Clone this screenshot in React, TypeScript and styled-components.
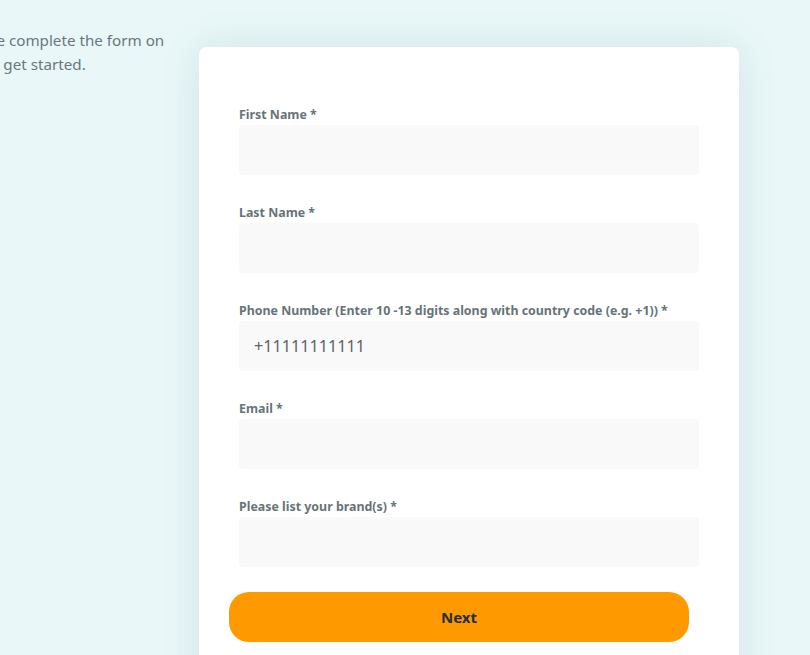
import * as React from 'react';
import styled, { createGlobalStyle } from 'styled-components';

const GlobalStyle = createGlobalStyle`
  html, body {
    margin: 0;
    padding: 0;
    height: 100%;
    overflow: hidden;
    background: #e9f7f8;
    font-family: "Noto Sans", "Open Sans", sans-serif;
  }
  #root {
    height: 100%;
  }
`;

const fields = [
  { label: 'First Name *', value: '' },
  { label: 'Last Name *', value: '' },
  { label: 'Phone Number (Enter 10 -13 digits along with country code (e.g. +1)) *', value: '+11111111111' },
  { label: 'Email *', value: '' },
  { label: 'Please list your brand(s) *', value: '' },
];

export default function App() {
  return (
    <>
      <GlobalStyle />
      <Page>
        <Intro>Now, please complete the form on the right to get started.</Intro>
        <Card>
          {fields.map((field, index) => (
            <Field key={index}>
              <Label>{field.label}</Label>
              <Input defaultValue={field.value} />
            </Field>
          ))}
          <NextButton type="button">Next</NextButton>
        </Card>
      </Page>
    </>
  );
}

const Page = styled.div`
  display: flex;
  justify-content: flex-end;
  align-items: flex-start;
  gap: 30px;
  padding: 47px 71px 0 0;
  height: 100%;
  box-sizing: border-box;
`;

const Intro = styled.p`
  flex-shrink: 0;
  width: 250px;
  margin: -19px 0 0;
  font-size: 15.2px;
  line-height: 24px;
  color: #69777d;
`;

const Card = styled.form`
  flex-shrink: 0;
  width: 540px;
  min-height: 700px;
  box-sizing: border-box;
  padding: 59px 40px 40px;
  background: #ffffff;
  border-radius: 8px;
  box-shadow: 0 0 40px rgba(40, 110, 120, 0.12);
  display: flex;
  flex-direction: column;
`;

const Field = styled.div`
  display: flex;
  flex-direction: column;
  gap: 2px;
  margin-bottom: 29px;

  &:last-of-type {
    margin-bottom: 25px;
  }
`;

const Label = styled.label`
  font-size: 12.4px;
  line-height: 17px;
  font-weight: 700;
  color: #687378;
`;

const Input = styled.input`
  height: 50px;
  box-sizing: border-box;
  border: none;
  border-radius: 4px;
  background: #f9f9f9;
  padding: 0 15px;
  font-family: inherit;
  font-size: 16.2px;
  color: #5a6468;
  outline: none;
`;

const NextButton = styled.button`
  height: 50px;
  width: 460px;
  margin-left: -10px;
  border: none;
  border-radius: 20px;
  background: #ff9900;
  font-family: inherit;
  font-size: 15px;
  font-weight: 700;
  color: #232f3e;
  cursor: pointer;
`;
